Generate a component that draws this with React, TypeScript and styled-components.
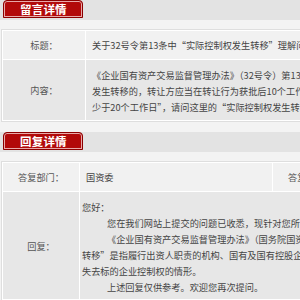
import React, { FC } from "react";
import styled, { createGlobalStyle } from "styled-components";

const GlobalStyle = createGlobalStyle`
  html, body {
    margin: 0;
    padding: 0;
    background: #f3f3f3;
    overflow: hidden;
  }
  body {
    font-family: "Noto Sans CJK SC", "Noto Sans", sans-serif;
    color: #444;
  }
`;

const Page = styled.div`
  width: 520px;
`;

const Section = styled.section`
  margin-bottom: 11px;
`;

const HeaderBar = styled.div`
  height: 20px;
  background: #e3e3e3;
  padding-left: 3px;
  box-sizing: border-box;
`;

const Tab = styled.div`
  width: 80px;
  height: 18px;
  box-sizing: border-box;
  background: #b20a0a;
  border: 1px solid #8c0000;
  box-shadow: inset 0 0 0 1px #e8a9a9;
  border-radius: 4px 4px 0 0;
  color: #fff;
  font-size: 11.5px;
  font-weight: bold;
  line-height: 16px;
  padding-left: 16px;
  letter-spacing: 0.2px;
`;

const Table = styled.table`
  margin: 10px 0 0 2px;
  border-collapse: separate;
  border-spacing: 1px;
  background: #fff;
  outline: 1px solid #dedede;
  table-layout: fixed;
  width: 500px;
  font-size: 9.2px;
`;

interface RowProps {
  $dark?: boolean;
}

const Row = styled.tr<RowProps>`
  background: ${({ $dark }) => ($dark ? "#e7e7e7" : "#f1f1f1")};
`;

interface LabelProps {
  $width: number;
}

const Label = styled.td<LabelProps>`
  width: ${({ $width }) => $width}px;
  text-align: center;
  color: #555;
  padding: 0;
`;

const Value = styled.td`
  padding: 7px 6px 5px 6px;
  line-height: 16px;
  white-space: nowrap;
  overflow: hidden;
  color: #444;
`;

interface SingleValueProps {
  $width?: number;
}

const SingleValue = styled(Value)<SingleValueProps>`
  height: 15px;
  padding: 6px 6px;
  ${({ $width }) => ($width ? `width: ${$width}px;` : "")}
`;

const ReplyValue = styled(Value)`
  padding: 7px 2px 4px 2px;
`;

interface LineProps {
  $indent?: boolean;
}

const Line = styled.div<LineProps>`
  height: 16px;
  padding-left: ${({ $indent }) => ($indent ? "25px" : "0")};
`;

const message = {
  title: "关于32号令第13条中“实际控制权发生转移”理解问题",
  content: [
    "《企业国有资产交易监督管理办法》（32号令）第13条规定“产权转让导致转让标的企业的实际控制权",
    "发生转移的，转让方应当在转让行为获批后10个工作日内，通过产权交易机构进行信息预披露，时间不得",
    "少于20个工作日”，请问这里的“实际控制权发生转移”如何理解？"
  ]
};

const reply = [
  { text: "您好：", indent: false },
  { text: "您在我们网站上提交的问题已收悉，现针对您所提问题答复如下：", indent: true },
  { text: "《企业国有资产交易监督管理办法》（国务院国资委 财政部令第32号）第十三条所称“实际控制权发生", indent: true },
  { text: "转移”是指履行出资人职责的机构、国有及国有控股企业、国有实际控制企业因产权转让导致其", indent: false },
  { text: "失去标的企业控制权的情形。", indent: false },
  { text: "上述回复仅供参考。欢迎您再次提问。", indent: true }
];

const SectionHeader: FC<{ title: string }> = ({ title }) => (
  <HeaderBar>
    <Tab>{title}</Tab>
  </HeaderBar>
);

const App: FC = () => {
  return (
    <Page>
      <GlobalStyle />
      <Section>
        <SectionHeader title="留言详情" />
        <Table>
          <tbody>
            <Row>
              <Label $width={82}>标题：</Label>
              <SingleValue>{message.title}</SingleValue>
            </Row>
            <Row $dark>
              <Label $width={82}>内容：</Label>
              <Value>
                {message.content.map(l => (
                  <Line key={l}>{l}</Line>
                ))}
              </Value>
            </Row>
          </tbody>
        </Table>
      </Section>
      <Section>
        <SectionHeader title="回复详情" />
        <Table>
          <tbody>
            <Row>
              <Label $width={76}>答复部门：</Label>
              <SingleValue $width={180}>国资委</SingleValue>
              <Label $width={76}>答复时间：</Label>
              <SingleValue>2018-03-12</SingleValue>
            </Row>
            <Row $dark>
              <Label $width={76}>回复：</Label>
              <ReplyValue colSpan={3}>
                {reply.map(r => (
                  <Line key={r.text} $indent={r.indent}>
                    {r.text}
                  </Line>
                ))}
              </ReplyValue>
            </Row>
          </tbody>
        </Table>
      </Section>
    </Page>
  );
};

export default App;
